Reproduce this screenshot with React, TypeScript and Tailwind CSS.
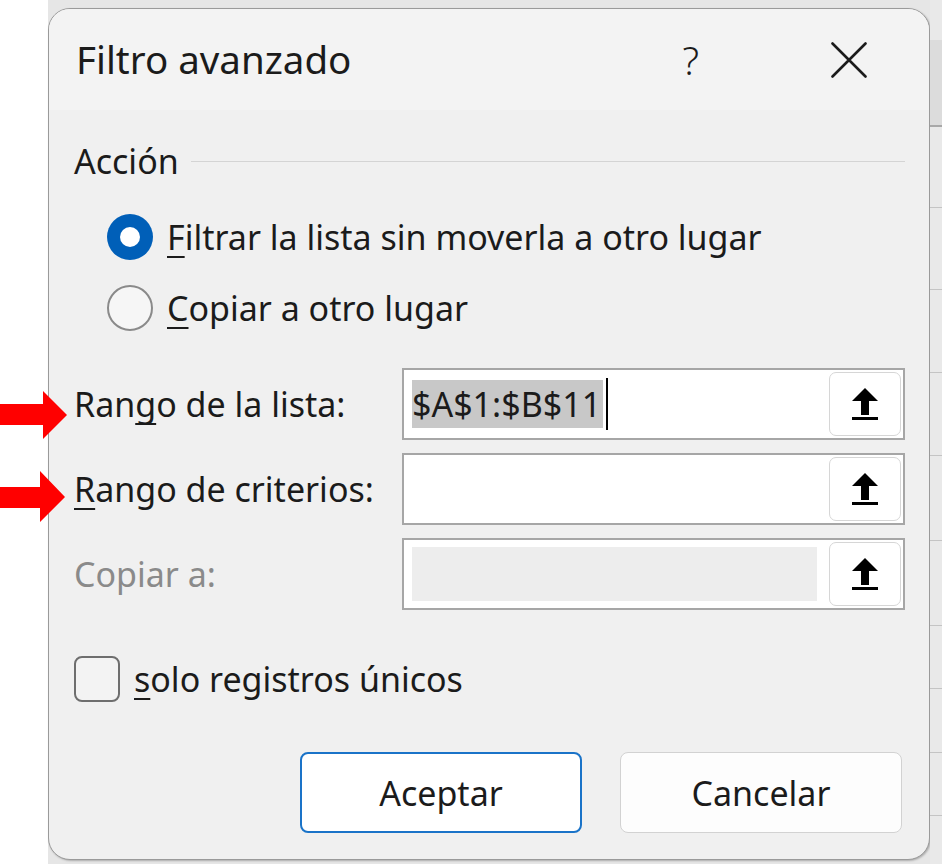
import React from "react";

function UploadIcon() {
  return (
    <svg width="26" height="32" viewBox="0 0 26 32" className="text-black">
      <path d="M13 0 L26 13 L0 13 Z" fill="currentColor" />
      <rect x="9" y="12" width="8" height="15" fill="currentColor" />
      <rect x="0" y="29" width="26" height="3" fill="currentColor" />
    </svg>
  );
}

function RangeRow({
  label,
  disabled,
  children,
}: {
  label: React.ReactNode;
  disabled?: boolean;
  children?: React.ReactNode;
}) {
  return (
    <div className="flex h-[72px] items-center">
      <div className={`w-[328px] shrink-0 ${disabled ? "text-[#8a8a8a]" : "text-[#1b1b1b]"}`}>{label}</div>
      <div className="flex h-full flex-1 items-center border-2 border-[#a6a6a6] bg-white pl-[8px] pr-[2px]">
        <div className="flex h-full flex-1 items-center py-[7px] pr-[12px]">{children}</div>
        <button className="flex h-[64px] w-[72px] items-center justify-center rounded-[7px] border border-[#d6d6d6] bg-white">
          <UploadIcon />
        </button>
      </div>
    </div>
  );
}

export default function App() {
  return (
    <div className="relative flex h-[864px] w-[942px] overflow-hidden bg-white font-['Noto_Sans',sans-serif] text-[34px] leading-none text-[#1b1b1b]">
      <div className="w-[48px] shrink-0 bg-white" />
      <div className="flex flex-1 bg-[#e6e6e6]">
        <div className="mt-[8px] flex h-[852px] w-[882px] shrink-0 flex-col overflow-hidden rounded-[22px] border border-[#9a9a9a] bg-[#f0f0f0] shadow-[1px_1px_2px_rgba(0,0,0,0.25)]">
          <div className="flex h-[101px] shrink-0 items-center bg-[#f3f3f3] pl-[27px] pr-[62px]">
            <span className="flex-1 text-[38.5px]">Filtro avanzado</span>
            <span className="mr-[132px] text-[39px] font-light">?</span>
            <svg width="36" height="36" viewBox="0 0 36 36">
              <path d="M1.5 1.5 L34.5 34.5 M34.5 1.5 L1.5 34.5" stroke="#1b1b1b" strokeWidth="2.6" strokeLinecap="round" />
            </svg>
          </div>

          <div className="flex flex-1 flex-col pl-[25px] pr-[24px]">
            <div className="mt-[29px] flex h-[44px] items-center gap-[12px]">
              <span>Acción</span>
              <div className="h-px flex-1 bg-[#d4d4d4]" />
            </div>

            <div className="mt-[18px] flex flex-col pl-[33px]">
              <div className="flex h-[71px] items-center gap-[14px]">
                <span className="flex h-[46px] w-[46px] items-center justify-center rounded-full bg-[#005fb8]">
                  <span className="h-[20px] w-[20px] rounded-full bg-white" />
                </span>
                <span>
                  <u className="decoration-2 underline-offset-[6px] [text-decoration-skip-ink:none]">F</u>iltrar la lista sin moverla a otro lugar
                </span>
              </div>
              <div className="flex h-[71px] items-center gap-[14px]">
                <span className="h-[46px] w-[46px] rounded-full border-2 border-[#8a8a8a] bg-[#f6f6f6]" />
                <span>
                  <u className="decoration-2 underline-offset-[6px] [text-decoration-skip-ink:none]">C</u>opiar a otro lugar
                </span>
              </div>
            </div>

            <div className="mt-[25px] flex flex-col gap-[13px]">
              <RangeRow
                label={
                  <>
                    Ran<u className="decoration-2 underline-offset-[6px] [text-decoration-skip-ink:none]">g</u>o de la lista:
                  </>
                }
              >
                <span className="flex h-[48px] items-center bg-[#c8c8c8] pr-[2px]">$A$1:$B$11</span>
                <span className="ml-[3px] h-[52px] w-[2px] bg-black" />
              </RangeRow>
              <RangeRow
                label={
                  <>
                    <u className="decoration-2 underline-offset-[6px] [text-decoration-skip-ink:none]">R</u>ango de criterios:
                  </>
                }
              />
              <RangeRow label="Copiar a:" disabled>
                <div className="h-full flex-1 bg-[#ededed]" />
              </RangeRow>
            </div>

            <div className="mt-[46px] flex items-center gap-[14px]">
              <span className="h-[46px] w-[46px] rounded-[8px] border-2 border-[#6e6e6e] bg-[#f3f3f3]" />
              <span>
                <u className="decoration-2 underline-offset-[6px] [text-decoration-skip-ink:none]">s</u>olo registros únicos
              </span>
            </div>

            <div className="mt-[50px] flex justify-end gap-[38px] pr-[3px]">
              <button className="h-[81px] w-[282px] rounded-[8px] border-2 border-[#1a73c8] bg-white text-[34px]">
                Aceptar
              </button>
              <button className="h-[81px] w-[282px] rounded-[8px] border border-[#d2d2d2] bg-[#fdfdfd] text-[34px]">
                Cancelar
              </button>
            </div>
          </div>
        </div>

        <div className="flex flex-1 flex-col">
          <div className="h-[40px] bg-[#e9e9e9]" />
          <div className="h-[87px] border-b-2 border-[#a8a8a8] bg-[#dcdcdc]" />
          <div className="h-[81px] border-b border-[#c4c4c4] bg-[#e9e9e9]" />
          <div className="h-[82px] border-b border-[#c4c4c4] bg-[#e9e9e9]" />
          <div className="h-[83px] border-b border-[#c4c4c4] bg-[#e9e9e9]" />
          <div className="h-[83px] border-b border-[#c4c4c4] bg-[#e9e9e9]" />
          <div className="h-[85px] border-b border-[#c4c4c4] bg-[#e9e9e9]" />
          <div className="h-[85px] border-b border-[#c4c4c4] bg-[#e9e9e9]" />
          <div className="h-[63px] border-b border-[#c4c4c4] bg-[#e9e9e9]" />
          <div className="h-[64px] border-b border-[#c4c4c4] bg-[#e9e9e9]" />
          <div className="h-[63px] border-b border-[#c4c4c4] bg-[#e9e9e9]" />
          <div className="flex-1 bg-[#e9e9e9]" />
        </div>
      </div>

      <svg className="absolute left-0 top-[388px]" width="70" height="140" viewBox="0 0 70 140">
        <polygon points="0,16 43,16 43,3 67,27 43,51 43,37 0,37" fill="#ff0000" />
        <polygon points="0,99 40,99 40,83 65,109 40,134 40,120 0,120" fill="#ff0000" />
      </svg>
    </div>
  );
}
